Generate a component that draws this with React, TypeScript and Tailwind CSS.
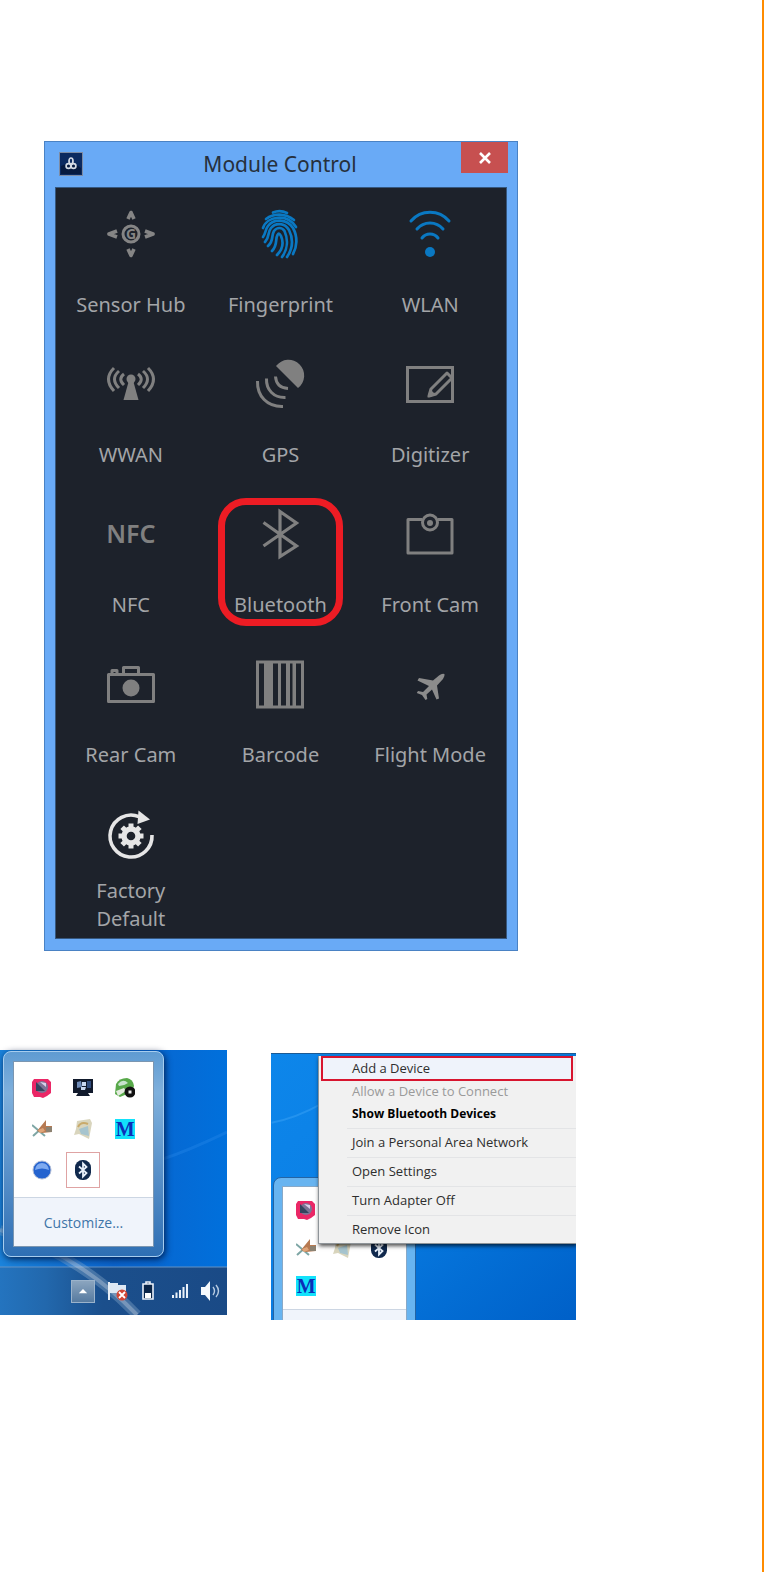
import React from 'react';
import clsx from 'clsx';

function Icon({ className, children }: { className?: string; children: React.ReactNode }) {
  return (
    <svg
      viewBox="0 0 48 48"
      className={clsx('h-12 w-12 overflow-visible', className)}
      fill="none"
      stroke="currentColor"
      strokeWidth="3"
      aria-hidden="true"
    >
      {children}
    </svg>
  );
}

function SensorIcon() {
  return (
    <Icon className="text-[#858585]">
      <path
        d="M21 9L24 2.500L27 9M21 39L24 45.500L27 39M10 21L2 24L10 27M38 21L46 24L38 27"
        strokeWidth="3.600"
        strokeLinejoin="round"
      />
      <circle cx="24" cy="24" r="8" />
      <text
        x="24"
        y="29"
        textAnchor="middle"
        className="font-['Noto_Sans',sans-serif] text-[14px] font-bold"
        fill="currentColor"
        stroke="none"
      >
        G
      </text>
    </Icon>
  );
}

function FingerprintIcon() {
  return (
    <Icon className="text-[#0a78c2]">
      <g strokeWidth="2.700" strokeLinecap="round">
        <path d="M17 2.500Q24 -0.500 31 3" />
        <path d="M10 9C18 3 29 3 38 10" />
        <path d="M7 18C11 6 31 3 40 17" />
        <path d="M7 27C10 23 9 20 12 16C18 8 31 9 37 18C42 27 41 37 37 44" />
        <path d="M9 32C14 27 11 23 15 18C20 12 29 13 33 20C37 28 37 38 31 47" />
        <path d="M12 36C18 31 15 26 18 21C21 17 26 17 28.500 21C32 29 32 39 26 47" />
        <path d="M16 41C22 35 19 29 21.500 25Q23 22 25 26C28 33 26 40 21 45" />
      </g>
    </Icon>
  );
}

function WlanIcon() {
  return (
    <Icon className="text-[#0a78c2]">
      <path d="M5 11A25 25 0 0 1 43 11M11 19A17 17 0 0 1 37 19M16 28A10 10 0 0 1 32 28" strokeLinecap="round" />
      <circle cx="24" cy="42" r="5" fill="currentColor" stroke="none" />
    </Icon>
  );
}

function WwanIcon() {
  return (
    <Icon className="text-[#808080]">
      <path d="M7 8Q-4 19 7 31M12 11Q3 19 12 28M17 14Q10.500 19 17 25" />
      <path d="M41 8Q52 19 41 31M36 11Q45 19 36 28M31 14Q37.500 19 31 25" />
      <circle cx="24" cy="19" r="4.500" fill="currentColor" stroke="none" />
      <path d="M21.500 22h5L31.500 40h-15z" fill="currentColor" stroke="none" />
    </Icon>
  );
}

function GpsIcon() {
  return (
    <Icon className="text-[#808080]">
      <path d="M20 6A15.700 15.700 0 1 1 42 28Z" fill="currentColor" stroke="none" />
      <path d="M1.500 21C1 36 11 47 27 46.500M10.500 18.500C10 30 18 38 29.500 37.500M19.500 16.500C20 24 24 28 32 28.500" />
    </Icon>
  );
}

function DigitizerIcon() {
  return (
    <Icon className="text-[#808080]">
      <path d="M1.500 7.500h45v34h-45z" />
      <path d="M23 36L25 29L41 13L46 18L30 34Z" strokeLinejoin="round" />
      <path d="M21.500 37.500L24 29L30 35Z" fill="currentColor" stroke="none" />
    </Icon>
  );
}

function BluetoothIcon() {
  return (
    <Icon className="text-[#808080]">
      <path d="M7.500 12.500L40.500 36L24 46.500V1.500L40.500 13L7.500 36" strokeWidth="3.200" />
    </Icon>
  );
}

function FrontCamIcon() {
  return (
    <Icon className="text-[#808080]">
      <path d="M16 9.500H2V43H46V9.500H32" strokeLinejoin="round" />
      <circle cx="24" cy="12.500" r="7.500" />
      <circle cx="24" cy="13" r="3" fill="currentColor" stroke="none" />
    </Icon>
  );
}

function RearCamIcon() {
  return (
    <Icon className="text-[#808080]">
      <path d="M1.500 14.500h45v27h-45zM16.500 14V7.500h15V14M5 14V10.500h5V14" strokeLinejoin="round" />
      <circle cx="24" cy="28" r="8.500" fill="currentColor" stroke="none" />
    </Icon>
  );
}

function BarcodeIcon() {
  return (
    <Icon className="text-[#808080]">
      <path d="M1.500 2h45v45h-45z" />
      <path d="M8 2h9v45H8zM22 2h3v45h-3zM30 2h4v45h-4zM36.500 2h3.500v45h-3.500z" fill="currentColor" stroke="none" />
    </Icon>
  );
}

function PlaneIcon() {
  return (
    <Icon className="text-[#8c8c8c]">
      <path
        d="M38.500 14Q36 13 33 15.500L27 20.500L13 18L11.500 20.500L23 26L17 32L12 31L10.800 33L16 35L19.500 40L21.300 39L20.500 34.500L26 29.500L30.500 39.500L33 38.500L31 25.500L37 19Q39 16 38.500 14Z"
        fill="currentColor"
        stroke="none"
      />
    </Icon>
  );
}

function FactoryIcon() {
  const teeth = [0, 45, 90, 135, 180, 225, 270, 315];
  return (
    <Icon className="text-[#e6e6e6]">
      <path d="M45 25A21 21 0 1 1 32 6.600" strokeWidth="3.600" />
      <path d="M31.500 0.500L43 9.500L30.500 14Z" fill="currentColor" stroke="none" />
      <circle cx="24" cy="26" r="7" strokeWidth="5.400" />
      {teeth.map((angle) => (
        <path key={angle} d="M24 19V13.500" strokeWidth="5" transform={`rotate(${angle} 24 26)`} />
      ))}
    </Icon>
  );
}

const modules = [
  { label: 'Sensor Hub', icon: <SensorIcon /> },
  { label: 'Fingerprint', icon: <FingerprintIcon /> },
  { label: 'WLAN', icon: <WlanIcon /> },
  { label: 'WWAN', icon: <WwanIcon /> },
  { label: 'GPS', icon: <GpsIcon /> },
  { label: 'Digitizer', icon: <DigitizerIcon /> },
  {
    label: 'NFC',
    icon: (
      <span aria-hidden="true" className="flex h-12 items-center text-[25px] font-semibold text-[#808080]">
        NFC
      </span>
    ),
  },
  { label: 'Bluetooth', icon: <BluetoothIcon />, marked: true },
  { label: 'Front Cam', icon: <FrontCamIcon /> },
  { label: 'Rear Cam', icon: <RearCamIcon /> },
  { label: 'Barcode', icon: <BarcodeIcon /> },
  { label: 'Flight Mode', icon: <PlaneIcon /> },
  { label: 'Factory Default', icon: <FactoryIcon /> },
];

function ModuleControl() {
  return (
    <section className="ml-11 w-full max-w-[474px] border border-[#4a82c4] bg-[#69aaf6] px-[10px] pb-[11px] font-['Noto_Sans',sans-serif]">
      <header className="-mr-px flex h-[45px] items-start justify-between">
        <svg viewBox="0 0 24 24" className="ml-1 mt-[10px] h-6 w-6" aria-hidden="true">
          <rect x="0.500" y="0.500" width="23" height="23" fill="#0b2a60" stroke="#7d8ba3" />
          <path d="M2 14Q12 8 22 16V22H2Z" fill="#061a40" />
          <g fill="none" stroke="#d4dae4" strokeWidth="1.700">
            <ellipse cx="12" cy="9" rx="2" ry="3" />
            <circle cx="9.500" cy="14" r="2.400" />
            <circle cx="14.500" cy="14" r="2.400" />
          </g>
        </svg>
        <h1 className="pl-4 text-[21px] leading-[44px] text-[#26303c]">Module Control</h1>
        <button type="button" aria-label="Close" className="flex h-[31px] w-[47px] items-center justify-center bg-[#c75050]">
          <svg viewBox="0 0 12 12" className="h-3 w-3" aria-hidden="true">
            <path d="M1 1L11 11M11 1L1 11" stroke="#fff" strokeWidth="2.600" />
          </svg>
        </button>
      </header>
      <div className="grid grid-cols-3 border border-[#35577f] bg-[#1d222b] pr-px">
        {modules.map((m) => (
          <button
            key={m.label}
            type="button"
            className="relative flex h-[150px] flex-col items-center gap-[19px] pt-[22px]"
          >
            {m.icon}
            <span className="flex h-14 w-28 items-center justify-center text-center text-[20px] leading-7 text-[#a3a5a8]">
              {m.label}
            </span>
            {m.marked && (
              <span className="absolute inset-x-3 top-[10px] h-32 rounded-[28px] border-[7px] border-[#ed1c24]" />
            )}
          </button>
        ))}
      </div>
    </section>
  );
}

function MediaIcon() {
  return (
    <svg viewBox="0 0 20 20" className="h-5 w-5" aria-hidden="true">
      <path d="M2 1h14l3 3v11l-4 3-4 2-3-1H2L0 15V4z" fill="#ea2766" />
      <circle cx="10" cy="9" r="6" fill="#7d7395" />
      <path d="M4 4v9h9z" fill="#34445e" />
      <path d="M8 4l6 5V5z" fill="#d9d2ea" />
    </svg>
  );
}

function DisplayIcon() {
  return (
    <svg viewBox="0 0 20 20" className="h-5 w-5" aria-hidden="true">
      <path d="M0 1h20v14H0zM5 15h10l2 3H3z" fill="#111a2c" />
      <path d="M4 4l4-1 1 6-5 1z" fill="#6f8bb8" />
      <path d="M9 4h4v4H9zM8 9h5l-1 3H8z" fill="#c9d8f0" />
      <path d="M14 3h4v7h-4z" fill="#314c7d" />
    </svg>
  );
}

function ServerIcon() {
  return (
    <svg viewBox="0 0 20 20" className="h-5 w-5" aria-hidden="true">
      <path d="M1 6Q4 0 12 0Q18 1 19 8L17 14L5 19L0 16Z" fill="#58a94a" />
      <path d="M3 6Q8 0 13 5Q9 8 4 8z" fill="#c8e3ce" />
      <path d="M1 13l8-3 2 3-8 5z" fill="#e4ebdf" />
      <circle cx="15" cy="14" r="5.500" fill="#111" />
      <path d="M13.500 12.500h3v3h-3z" fill="#eee" />
    </svg>
  );
}

function ToolsIcon() {
  return (
    <svg viewBox="0 0 20 20" className="h-5 w-5" aria-hidden="true">
      <path d="M0 6L13 17M1 17L11 8" stroke="#7ea6a5" strokeWidth="2" />
      <path d="M5 12L14 1L14 7L20 7V13L10 14Z" fill="#b77a52" />
      <path d="M14 8h6v5h-6z" fill="#8c8272" />
      <path d="M6 11l5-2 2 3-5 2z" fill="#e0a579" />
    </svg>
  );
}

function NotesIcon() {
  return (
    <svg viewBox="0 0 20 20" className="h-5 w-5" aria-hidden="true">
      <path d="M4 2L17 0L19 4L16 20L6 15L1 16L3 10Z" fill="#d9d5bd" />
      <path d="M6 10L15 7L16 17L8 15Z" fill="#a6c4ce" />
      <path d="M5 8Q8 2 15 5" fill="none" stroke="#c9aa6b" strokeWidth="2" />
    </svg>
  );
}

function LetterIcon() {
  return (
    <span className="flex h-5 w-5 items-center justify-center bg-[#12e2fb] font-['Liberation_Serif',serif] text-[20px] leading-5 font-bold text-[#0b2fb8]">
      M
    </span>
  );
}

function BallIcon() {
  return (
    <svg viewBox="0 0 20 20" className="h-5 w-5" aria-hidden="true">
      <circle cx="10" cy="10" r="9" fill="#2463cf" stroke="#aebbd6" />
      <path d="M3 10Q4 3 10 3T17 10Q10 7 3 10Z" fill="#7eaaf0" />
    </svg>
  );
}

function TrayBluetoothIcon() {
  return (
    <svg viewBox="0 0 20 20" className="h-5 w-5" aria-hidden="true">
      <rect x="2" y="0" width="16" height="20" rx="7.500" fill="#10294d" />
      <path d="M6 6.500L13.500 13L10 16.500V3.500L13.500 7L6 13.500" fill="none" stroke="#e8f0fa" strokeWidth="1.800" />
    </svg>
  );
}

function TrayDesktop() {
  return (
    <section className="relative flex h-[265px] w-[227px] shrink-0 flex-col bg-linear-to-r from-[#1b84dc] via-[#0a63cc] to-[#0070dc] font-['Open_Sans',sans-serif]">
      <svg viewBox="0 0 227 265" className="absolute inset-0 h-full w-full" aria-hidden="true">
        <defs>
          <linearGradient id="taskbar">
            <stop offset="0" stopColor="#2474bf" />
            <stop offset="0.200" stopColor="#2268ad" />
            <stop offset="0.450" stopColor="#1b4f8c" />
            <stop offset="1" stopColor="#1a4a86" />
          </linearGradient>
        </defs>
        <path d="M160 110Q190 100 227 82" stroke="#2688e8" strokeWidth="3" fill="none" opacity="0.400" />
        <path d="M0 217H227V265H0Z" fill="url(#taskbar)" />
        <path d="M0 217H227" stroke="#6593c4" />
        <path d="M0 180Q80 205 137 265" stroke="#a8c3dc" strokeWidth="10" fill="none" opacity="0.300" />
        <path d="M0 180Q80 205 137 265" stroke="#d0dbe6" strokeWidth="4" fill="none" opacity="0.350" />
      </svg>
      <div className="relative ml-[3px] mt-px h-[206px] w-[161px] rounded-lg border border-[#a7cdee] bg-linear-to-b from-[#5f9bd2] via-[#7fb0dc] via-20% to-[#2e6fb4] p-[9px] shadow-[1px_2px_7px_rgba(0,20,60,0.9)]">
        <div className="flex h-full flex-col border border-[#7b96b1] bg-white">
          <div className="grid flex-1 grid-cols-3 content-start justify-items-center gap-y-[21px] px-[7px] pt-4">
            <MediaIcon />
            <DisplayIcon />
            <ServerIcon />
            <ToolsIcon />
            <NotesIcon />
            <LetterIcon />
            <BallIcon />
            <span className="relative">
              <TrayBluetoothIcon />
              <span className="absolute -inset-x-[7px] -inset-y-2 border border-[#dfa3a3]" />
            </span>
          </div>
          <a href="#customize" className="flex h-[49px] items-center justify-center border-t border-[#ccd6e3] bg-[#f0f4fb] text-[14px] text-[#3f74a8]">
            Customize...
          </a>
        </div>
      </div>
      <div className="relative mt-auto flex h-12 items-center justify-end gap-[13px] pr-[6px]">
        <button type="button" aria-label="Show hidden icons" className="flex h-[23px] w-6 items-center justify-center border border-[#9bb3cb] bg-linear-to-b from-[#8ba5bf] to-[#577ba0]">
          <svg viewBox="0 0 10 6" className="h-[5px] w-[10px]" aria-hidden="true">
            <path d="M0 5L5 0L10 5Z" fill="#fff" />
          </svg>
        </button>
        <svg viewBox="0 0 20 20" className="h-5 w-5" aria-hidden="true">
          <path d="M1 1v18" stroke="#e6edf5" strokeWidth="2" />
          <path d="M2 2h8v2h8v8H2z" fill="#dde8f4" />
          <circle cx="14" cy="14" r="5.500" fill="#cf4636" />
          <path d="M11 11l6 6M17 11l-6 6" stroke="#fff" strokeWidth="1.800" />
        </svg>
        <svg viewBox="0 0 14 20" className="h-5 w-[14px]" aria-hidden="true">
          <path d="M2 3h10v15H2zM5 1h4v2H5z" fill="#0a2548" stroke="#eaf1fa" strokeWidth="1.600" />
          <path d="M4 12h6v5H4z" fill="#fff" />
        </svg>
        <svg viewBox="0 0 16 16" className="ml-1 h-4 w-4" aria-hidden="true">
          <path d="M0 12h2v3H0zM3.500 9.500h2V15h-2zM7 7h2v8H7zM10.500 4h2v11h-2zM14 1h2v14h-2z" fill="#e9f1fa" />
        </svg>
        <svg viewBox="0 0 20 20" className="h-5 w-5" aria-hidden="true">
          <path d="M0 6h4l5-6v20l-5-6H0z" fill="#f5f9fd" />
          <path d="M12 6q3 4 0 8M15 4q5 6 0 12" fill="none" stroke="#b7cbe2" strokeWidth="1.400" />
        </svg>
      </div>
    </section>
  );
}

const menuItems = [
  { label: 'Add a Device', highlighted: true },
  { label: 'Allow a Device to Connect', disabled: true },
  { label: 'Show Bluetooth Devices', bold: true },
  { label: 'Join a Personal Area Network', separated: true },
  { label: 'Open Settings', separated: true },
  { label: 'Turn Adapter Off', separated: true },
  { label: 'Remove Icon', separated: true },
];

function MenuDesktop() {
  return (
    <section className="relative mt-[3px] h-[267px] w-[305px] shrink-0 overflow-hidden border-t border-[#1c5a94] bg-linear-to-br from-[#0d86ea] via-[#0b80e6] via-40% to-[#0060c8] font-['Open_Sans',sans-serif]">
      <svg viewBox="0 0 305 267" className="absolute inset-0 h-full w-full" aria-hidden="true">
        <path d="M0 69Q25 64 50 50" stroke="#3aa2f5" strokeWidth="2" fill="none" opacity="0.500" />
      </svg>
      <div className="absolute left-[2px] top-[123px] h-[150px] w-[143px] rounded-t-lg border border-[#2464a4] bg-[#68b4f0] px-2 pt-2">
        <div className="flex h-full flex-col border border-[#88a9c8] bg-white">
          <div className="grid h-[122px] shrink-0 grid-cols-3 content-start justify-items-center gap-y-[18px] pl-[5px] pr-[9px] pt-[13px]">
            <MediaIcon />
            <span />
            <span />
            <ToolsIcon />
            <NotesIcon />
            <TrayBluetoothIcon />
            <LetterIcon />
          </div>
          <div className="flex-1 border-t border-[#ccd6e3] bg-[#f0f4fb]" />
        </div>
      </div>
      <div className="absolute left-[47px] right-0 top-[2px] border-l border-b border-[#8e9499] bg-[#f1f1f1] pb-[2px] shadow-[1px_2px_4px_rgba(0,0,0,0.7)]">
        {menuItems.map((item) => (
          <div key={item.label} className={clsx(item.highlighted && 'pl-[2px] pr-[3px]')}>
            {item.separated && <div className="my-[3px] ml-7 h-px bg-[#e3e4e6]" />}
            <button
              type="button"
              disabled={item.disabled}
              className={clsx(
                'flex w-full items-center text-left',
                item.highlighted ? 'h-[25px] border-2 border-[#d8152f] bg-[#eff3fb] pl-[29px]' : 'h-[22px] pl-[33px]',
                item.bold ? 'font-bold text-[12px]' : 'text-[13px]',
                item.disabled ? 'text-[#9a9a9a]' : item.bold ? 'text-black' : 'text-[#2e2e2e]'
              )}
            >
              {item.label}
            </button>
          </div>
        ))}
      </div>
    </section>
  );
}

function App() {
  return (
    <main className="min-h-screen border-r-2 border-[#ff8c00] bg-white pt-[141px]">
      <ModuleControl />
      <div className="mt-[99px] flex items-start gap-11">
        <TrayDesktop />
        <MenuDesktop />
      </div>
    </main>
  );
}

export default App;
